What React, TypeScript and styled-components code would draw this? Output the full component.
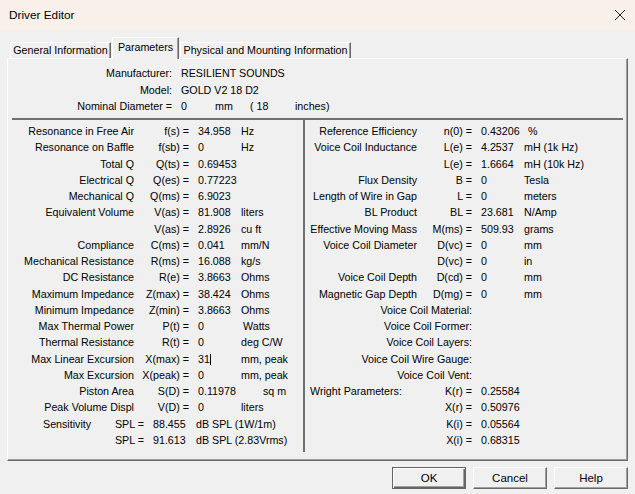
import React from 'react';
import styled, { createGlobalStyle } from 'styled-components';

const GlobalStyle = createGlobalStyle`
  html, body {
    margin: 0;
    padding: 0;
    background: #f0f0f0;
  }
  body {
    font-family: "Liberation Sans", Arial, sans-serif;
    font-size: 10.7px;
    color: #000;
  }
`;

const ROW_H = 16.26;
const LEFT_COLS = '122px 55px 52px auto';
const RIGHT_COLS = '112px 55px 52px auto';

const Window = styled.div`
  width: 635px;
  height: 494px;
  background: #f0f0f0;
  display: flex;
  flex-direction: column;
  overflow: hidden;
`;

const TitleBar = styled.div`
  height: 30px;
  flex: none;
  background: #f9f0ea;
  display: flex;
  align-items: center;
  justify-content: space-between;
  padding: 0 9px 0 9px;
  font-family: "Liberation Sans", Arial, sans-serif;
  font-size: 11.8px;
`;

const CloseBox = styled.div`
  width: 12px;
  height: 12px;
  display: flex;
`;

const Body = styled.div`
  padding: 7px 7px 0 7px;
  display: flex;
  flex-direction: column;
`;

const TabRow = styled.div`
  height: 21px;
  display: flex;
  align-items: flex-end;
  padding-left: 3px;
  position: relative;
  z-index: 1;
`;

const Tab = styled.div<{ $active?: boolean; $w: number; $ml?: number }>`
  box-sizing: border-box;
  width: ${p => p.$w}px;
  margin-left: ${p => p.$ml ?? 0}px;
  height: ${p => (p.$active ? 22 : 16)}px;
  margin-bottom: ${p => (p.$active ? -1 : 0)}px;
  background: #f0f0f0;
  border-top: 1px solid #fff;
  border-left: 1px solid #fff;
  border-right: 1px solid #696969;
  box-shadow: inset -1px 0 0 #a0a0a0;
  display: flex;
  align-items: ${p => (p.$active ? 'flex-start' : 'center')};
  padding-top: ${p => (p.$active ? 3 : 0)}px;
  padding-bottom: ${p => (p.$active ? 0 : 2)}px;
  justify-content: center;
  white-space: nowrap;
`;

const Panel = styled.div`
  box-sizing: border-box;
  height: 403px;
  border-top: 1px solid #fff;
  border-left: 1px solid #fff;
  border-right: 1px solid #696969;
  border-bottom: 1px solid #696969;
  box-shadow: inset -1px -1px 0 #a0a0a0;
  padding: 0 4px;
  display: flex;
  flex-direction: column;
`;

const Header = styled.div`
  box-sizing: border-box;
  height: 59px;
  padding-top: 6px;
  display: grid;
  grid-template-columns: 160px auto;
  grid-auto-rows: 16.5px;
  column-gap: 9px;
  align-items: center;
  white-space: nowrap;
`;

const HeadLabel = styled.div`
  text-align: right;
`;

const HeadValue = styled.div`
  display: flex;
`;

const Slot = styled.span<{ $w: number }>`
  display: inline-block;
  width: ${p => p.$w}px;
`;

const Separator = styled.div`
  height: 2px;
  flex: none;
  background: #707070;
`;

const DataArea = styled.div`
  display: flex;
  height: 332px;
`;

const Column = styled.div<{ $w?: number }>`
  ${p => (p.$w ? `width: ${p.$w}px;` : 'flex: 1;')}
  padding-top: 3px;
`;

const Divider = styled.div`
  width: 2px;
  background: #707070;
  flex: none;
`;

const Row = styled.div<{ $cols: string }>`
  display: grid;
  grid-template-columns: ${p => p.$cols};
  height: ${ROW_H}px;
  align-items: center;
  white-space: nowrap;
`;

const Label = styled.div<{ $span?: number; $left?: number }>`
  text-align: ${p => (p.$left !== undefined ? 'left' : 'right')};
  padding-left: ${p => p.$left ?? 0}px;
  ${p => (p.$span ? `grid-column: span ${p.$span};` : '')}
`;

const Sym = styled.div`
  text-align: right;
`;

const Val = styled.div`
  padding-left: 9px;
`;

const Unit = styled.div<{ $indent?: number }>`
  padding-left: ${p => p.$indent ?? 0}px;
`;

const Caret = styled.span`
  display: inline-block;
  width: 1px;
  height: 11px;
  background: #000;
  vertical-align: -2px;
`;

const ButtonRow = styled.div`
  display: flex;
  justify-content: flex-end;
  gap: 7px;
  padding-top: 6px;
`;

const Button = styled.div<{ $default?: boolean }>`
  box-sizing: border-box;
  width: 74px;
  height: 22px;
  display: flex;
  align-items: center;
  justify-content: center;
  background: #f0f0f0;
  border: 1px solid;
  border-color: ${p => (p.$default ? '#646464' : '#fff #696969 #696969 #fff')};
  box-shadow: ${p =>
    p.$default
      ? 'inset 1px 1px 0 #fff, inset -1px -1px 0 #646464, inset -2px -2px 0 #a0a0a0'
      : 'inset -1px -1px 0 #a0a0a0'};
  font-size: 11.5px;
`;

type P = [string, string, string, string, number?, boolean?];

const left: P[] = [
  ['Resonance in Free Air', 'f(s) =', '34.958', 'Hz'],
  ['Resonance on Baffle', 'f(sb) =', '0', 'Hz'],
  ['Total Q', 'Q(ts) =', '0.69453', ''],
  ['Electrical Q', 'Q(es) =', '0.77223', ''],
  ['Mechanical Q', 'Q(ms) =', '6.9023', ''],
  ['Equivalent Volume', 'V(as) =', '81.908', 'liters'],
  ['', 'V(as) =', '2.8926', 'cu ft'],
  ['Compliance', 'C(ms) =', '0.041', 'mm/N'],
  ['Mechanical Resistance', 'R(ms) =', '16.088', 'kg/s'],
  ['DC Resistance', 'R(e) =', '3.8663', 'Ohms'],
  ['Maximum Impedance', 'Z(max) =', '38.424', 'Ohms'],
  ['Minimum Impedance', 'Z(min) =', '3.8663', 'Ohms'],
  ['Max Thermal Power', 'P(t) =', '0', 'Watts', 2],
  ['Thermal Resistance', 'R(t) =', '0', 'deg C/W'],
  ['Max Linear Excursion', 'X(max) =', '31', 'mm, peak', 0, true],
  ['Max Excursion', 'X(peak) =', '0', 'mm, peak'],
  ['Piston Area', 'S(D) =', '0.11978', 'sq m', 22],
  ['Peak Volume Displ', 'V(D) =', '0', 'liters'],
];

const sensitivity: [string, string, string, string][] = [
  ['Sensitivity', 'SPL =', '88.455', 'dB SPL (1W/1m)'],
  ['', 'SPL =', '91.613', 'dB SPL (2.83Vrms)'],
];

const right: P[] = [
  ['Reference Efficiency', 'n(0) =', '0.43206', '%', 4],
  ['Voice Coil Inductance', 'L(e) =', '4.2537', 'mH (1k Hz)'],
  ['', 'L(e) =', '1.6664', 'mH (10k Hz)'],
  ['Flux Density', 'B =', '0', 'Tesla'],
  ['Length of Wire in Gap', 'L =', '0', 'meters'],
  ['BL Product', 'BL =', '23.681', 'N/Amp'],
  ['Effective Moving Mass', 'M(ms) =', '509.93', 'grams'],
  ['Voice Coil Diameter', 'D(vc) =', '0', 'mm'],
  ['', 'D(vc) =', '0', 'in'],
  ['Voice Coil Depth', 'D(cd) =', '0', 'mm'],
  ['Magnetic Gap Depth', 'D(mg) =', '0', 'mm'],
];

const coilInfo = [
  'Voice Coil Material:',
  'Voice Coil Former:',
  'Voice Coil Layers:',
  'Voice Coil Wire Gauge:',
  'Voice Coil Vent:',
];

const wright: [string, string][] = [
  ['K(r) =', '0.25584'],
  ['X(r) =', '0.50976'],
  ['K(i) =', '0.05564'],
  ['X(i) =', '0.68315'],
];

const ParamRows = ({ rows, cols }: { rows: P[]; cols: string }) => (
  <>
    {rows.map(([label, sym, val, unit, indent, caret], i) => (
      <Row key={i} $cols={cols}>
        <Label>{label}</Label>
        <Sym>{sym}</Sym>
        <Val>
          {val}
          {caret && <Caret />}
        </Val>
        <Unit $indent={indent}>{unit}</Unit>
      </Row>
    ))}
  </>
);

export default function App() {
  return (
    <>
      <GlobalStyle />
      <Window>
        <TitleBar>
          <span>Driver Editor</span>
          <CloseBox>
            <svg width="12" height="12" viewBox="0 0 12 12">
              <path d="M1 1 L11 11 M11 1 L1 11" stroke="#222" strokeWidth="1" fill="none" />
            </svg>
          </CloseBox>
        </TitleBar>
        <Body>
          <TabRow>
            <Tab $w={101}>General Information</Tab>
            <Tab $w={67} $ml={1} $active>
              Parameters
            </Tab>
            <Tab $w={171} $ml={1}>
              Physical and Mounting Information
            </Tab>
          </TabRow>
          <Panel>
            <Header>
              <HeadLabel>Manufacturer:</HeadLabel>
              <HeadValue>RESILIENT SOUNDS</HeadValue>
              <HeadLabel>Model:</HeadLabel>
              <HeadValue>GOLD V2 18 D2</HeadValue>
              <HeadLabel>Nominal Diameter =</HeadLabel>
              <HeadValue>
                <Slot $w={34}>0</Slot>
                <Slot $w={35}>mm</Slot>
                <Slot $w={45}>( 18</Slot>
                <span>inches)</span>
              </HeadValue>
            </Header>
            <Separator />
            <DataArea>
              <Column $w={291}>
                <ParamRows rows={left} cols={LEFT_COLS} />
                {sensitivity.map(([label, sym, val, unit], i) => (
                  <Row key={i} $cols="85px 47px 52px auto">
                    <Label $left={31}>{label}</Label>
                    <Sym>{sym}</Sym>
                    <Val>{val}</Val>
                    <Unit>{unit}</Unit>
                  </Row>
                ))}
              </Column>
              <Divider />
              <Column>
                <ParamRows rows={right} cols={RIGHT_COLS} />
                {coilInfo.map(text => (
                  <Row key={text} $cols={RIGHT_COLS}>
                    <Label $span={2}>{text}</Label>
                  </Row>
                ))}
                {wright.map(([sym, val], i) => (
                  <Row key={sym} $cols={RIGHT_COLS}>
                    <Label $left={5}>{i === 0 ? 'Wright Parameters:' : ''}</Label>
                    <Sym>{sym}</Sym>
                    <Val>{val}</Val>
                  </Row>
                ))}
              </Column>
            </DataArea>
          </Panel>
          <ButtonRow>
            <Button $default>OK</Button>
            <Button>Cancel</Button>
            <Button>Help</Button>
          </ButtonRow>
        </Body>
      </Window>
    </>
  );
}
